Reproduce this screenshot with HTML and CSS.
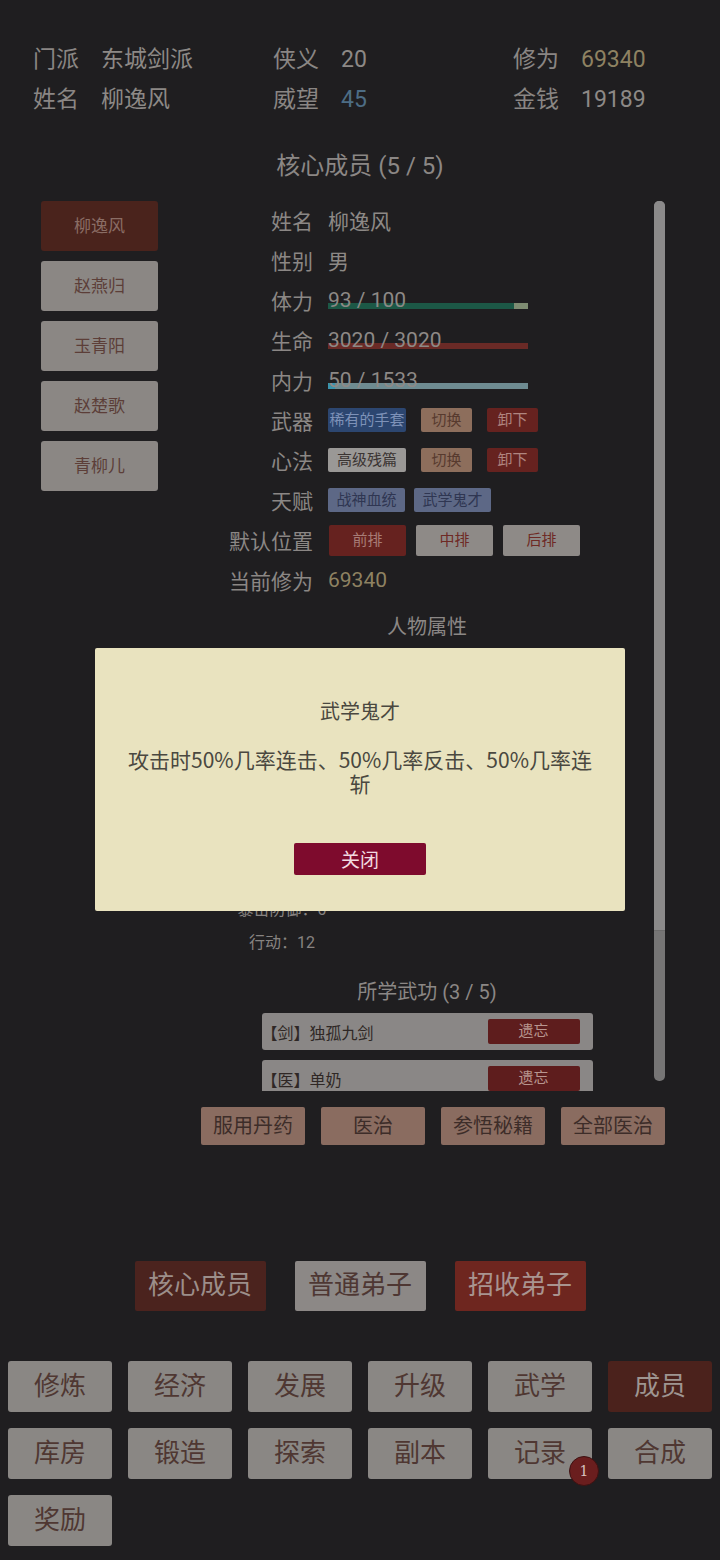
FILE: index.html
```html
<!DOCTYPE html>
<html lang="zh-CN">
<head>
    <meta charset="UTF-8">
    <meta name="viewport" content="width=device-width, initial-scale=1.0">
    <title>成员</title>
    <link rel="stylesheet" href="styles.css">
</head>
<body>
    <div class="page">
        <div class="header">
            <div class="stat"><span class="stat-label">门派</span><span class="stat-value">东城剑派</span></div>
            <div class="stat"><span class="stat-label">侠义</span><span class="stat-value">20</span></div>
            <div class="stat"><span class="stat-label">修为</span><span class="stat-value gold">69340</span></div>
            <div class="stat"><span class="stat-label">姓名</span><span class="stat-value">柳逸风</span></div>
            <div class="stat"><span class="stat-label">威望</span><span class="stat-value blue">45</span></div>
            <div class="stat"><span class="stat-label">金钱</span><span class="stat-value">19189</span></div>
        </div>

        <div class="section-title">核心成员 (5 / 5)</div>

        <div class="panel">
            <div class="members">
                <div class="member active">柳逸风</div>
                <div class="member">赵燕归</div>
                <div class="member">玉青阳</div>
                <div class="member">赵楚歌</div>
                <div class="member">青柳儿</div>
            </div>

            <div class="detail">
                <div class="row"><span class="label">姓名</span><span class="value">柳逸风</span></div>
                <div class="row"><span class="label">性别</span><span class="value">男</span></div>
                <div class="row">
                    <span class="label">体力</span>
                    <div class="bar-wrap">
                        <span class="value">93 / 100</span>
                        <div class="bar stamina"><div class="fill" style="width: 93%"></div></div>
                    </div>
                </div>
                <div class="row">
                    <span class="label">生命</span>
                    <div class="bar-wrap">
                        <span class="value">3020 / 3020</span>
                        <div class="bar life"><div class="fill" style="width: 100%"></div></div>
                    </div>
                </div>
                <div class="row">
                    <span class="label">内力</span>
                    <div class="bar-wrap">
                        <span class="value">50 / 1533</span>
                        <div class="bar inner"><div class="fill" style="width: 3.3%"></div></div>
                    </div>
                </div>
                <div class="row">
                    <span class="label">武器</span>
                    <div class="chips">
                        <span class="chip item rare">稀有的手套</span>
                        <span class="chip act swap">切换</span>
                        <span class="chip act drop">卸下</span>
                    </div>
                </div>
                <div class="row">
                    <span class="label">心法</span>
                    <div class="chips">
                        <span class="chip item plain">高级残篇</span>
                        <span class="chip act swap">切换</span>
                        <span class="chip act drop">卸下</span>
                    </div>
                </div>
                <div class="row">
                    <span class="label">天赋</span>
                    <div class="chips talents">
                        <span class="chip talent">战神血统</span>
                        <span class="chip talent">武学鬼才</span>
                    </div>
                </div>
                <div class="row">
                    <span class="label">默认位置</span>
                    <div class="chips places">
                        <span class="place on">前排</span>
                        <span class="place">中排</span>
                        <span class="place">后排</span>
                    </div>
                </div>
                <div class="row"><span class="label">当前修为</span><span class="value gold">69340</span></div>

                <div class="sub-title">人物属性</div>
                <div class="attrs">
                    <div class="attr">攻击：486</div>
                    <div class="attr">防御：215</div>
                    <div class="attr">命中：120</div>
                    <div class="attr">闪避：64</div>
                    <div class="attr">暴击：35</div>
                    <div class="attr">暴伤：150</div>
                    <div class="attr">连击：50</div>
                    <div class="attr">暴击防御：0</div>
                    <div class="attr">行动：12</div>
                </div>

                <div class="sub-title skills-title">所学武功 (3 / 5)</div>
                <div class="skills">
                    <div class="skill"><span>【剑】独孤九剑</span><span class="forget">遗忘</span></div>
                    <div class="skill"><span>【医】单奶</span><span class="forget">遗忘</span></div>
                </div>
            </div>

            <div class="scrollbar"><div class="thumb"></div></div>
        </div>

        <div class="actions">
            <button class="action">服用丹药</button>
            <button class="action">医治</button>
            <button class="action">参悟秘籍</button>
            <button class="action">全部医治</button>
        </div>

        <div class="tabs">
            <button class="tab core">核心成员</button>
            <button class="tab">普通弟子</button>
            <button class="tab recruit">招收弟子</button>
        </div>

        <div class="nav">
            <button class="nav-btn">修炼</button>
            <button class="nav-btn">经济</button>
            <button class="nav-btn">发展</button>
            <button class="nav-btn">升级</button>
            <button class="nav-btn">武学</button>
            <button class="nav-btn current">成员</button>
            <button class="nav-btn">库房</button>
            <button class="nav-btn">锻造</button>
            <button class="nav-btn">探索</button>
            <button class="nav-btn">副本</button>
            <button class="nav-btn">记录<span class="badge">1</span></button>
            <button class="nav-btn">合成</button>
            <button class="nav-btn">奖励</button>
        </div>
    </div>

    <div class="modal">
        <div class="modal-title">武学鬼才</div>
        <div class="modal-text">攻击时50%几率连击、50%几率反击、50%几率连斩</div>
        <button class="modal-close">关闭</button>
    </div>
</body>
</html>
```

FILE: styles.css
```css
body {
    margin: 0;
    background: #1f1e20;
    font-family: Roboto, "Noto Sans CJK SC", sans-serif;
    color: #8d8986;
}

.page {
    width: 720px;
    height: 1560px;
    padding-top: 40px;
    box-sizing: border-box;
}

button {
    font-family: inherit;
    border: none;
    padding: 0;
    line-height: 1.2;
}

.header {
    display: grid;
    grid-template-columns: repeat(3, 240px);
    padding-left: 33px;
    font-size: 23px;
    line-height: 40px;
}

.stat-label {
    color: #8a8684;
    display: inline-block;
    width: 68px;
}

.gold {
    color: #8e8262;
}

.blue {
    color: #4d6d85;
}

.section-title {
    margin-top: 26px;
    text-align: center;
    font-size: 24px;
    line-height: 40px;
    color: #8b8785;
}

/* member panel */
.panel {
    margin-top: 14px;
    height: 891px;
    overflow: hidden;
    display: flex;
}

.members {
    margin-left: 41px;
    width: 117px;
    padding-top: 1px;
    display: flex;
    flex-direction: column;
    gap: 10px;
}

.member {
    height: 50px;
    line-height: 50px;
    text-align: center;
    font-size: 17px;
    background: #8b8784;
    color: #5c3e38;
    border-radius: 3px;
}

.member.active {
    background: #4a231c;
    color: #8a6d65;
}

.detail {
    margin-left: 42px;
    width: 454px;
    flex-shrink: 0;
}

.row {
    display: flex;
    align-items: center;
    height: 40px;
    font-size: 21px;
}

.label {
    width: 113px;
    text-align: right;
    margin-right: 15px;
    color: #8b8785;
    flex-shrink: 0;
}

.bar-wrap {
    position: relative;
    width: 200px;
    height: 40px;
    line-height: 40px;
}

.bar-wrap .value {
    position: relative;
    z-index: 1;
}

.bar {
    position: absolute;
    left: 0;
    right: 0;
    top: 23px;
    height: 6px;
}

.bar .fill {
    height: 100%;
}

.bar.stamina {
    background: #7e8c72;
}

.bar.stamina .fill {
    background: #1c5846;
}

.bar.life {
    background: #6a2a26;
}

.bar.life .fill {
    background: #6a2a26;
}

.bar.inner {
    background: #6e8b91;
}

.bar.inner .fill {
    background: #3b93ad;
}

.chips {
    display: flex;
    gap: 15px;
    font-size: 15px;
}

.chip {
    height: 24px;
    line-height: 24px;
    text-align: center;
    border-radius: 2px;
}

.chip.item {
    width: 78px;
}

.chip.act {
    width: 51px;
}

.chip.rare {
    background: #2c4670;
    color: #7e92b8;
}

.chip.plain {
    background: #9a9896;
    color: #3a3432;
}

.chip.swap {
    background: #8d6e5c;
    color: #573a2e;
}

.chip.drop {
    background: #66221f;
    color: #b08580;
}

.chips.talents {
    gap: 9px;
}

.chip.talent {
    width: 77px;
    background: #5d6886;
    color: #2f3652;
}

.chips.places {
    gap: 10px;
    margin-left: 1px;
}

.place {
    width: 77px;
    height: 31px;
    line-height: 31px;
    text-align: center;
    border-radius: 2px;
    background: #8e8a87;
    color: #6e2a25;
}

.place.on {
    background: #66221f;
    color: #a87c76;
}

.sub-title {
    margin-top: 12px;
    text-align: center;
    font-size: 20px;
    line-height: 30px;
    color: #8b8785;
}

.attrs {
    margin-top: 20px;
    width: 164px;
}

.attr {
    height: 33px;
    line-height: 33px;
    text-align: center;
    font-size: 16px;
    color: #878381;
}

.skills-title {
    margin-top: 18px;
}

.skills {
    margin-top: 6px;
    display: flex;
    flex-direction: column;
    align-items: center;
    gap: 10px;
}

.skill {
    width: 331px;
    height: 37px;
    box-sizing: border-box;
    padding-right: 13px;
    display: flex;
    align-items: center;
    justify-content: space-between;
    background: #8a8786;
    border-radius: 3px;
    font-size: 16px;
    color: #2f2725;
}

.forget {
    width: 92px;
    height: 25px;
    line-height: 25px;
    text-align: center;
    font-size: 15px;
    background: #5e1d1d;
    color: #b8958f;
    border-radius: 2px;
}

.scrollbar {
    margin-top: 1px;
    width: 11px;
    height: 880px;
    background: #767575;
    border-radius: 5px;
    overflow: hidden;
}

.thumb {
    height: 729px;
    background: #8b8a8a;
    border-bottom: 1px solid #6c6b6b;
}

/* actions */
.actions {
    margin-top: 16px;
    display: flex;
    justify-content: flex-end;
    gap: 16px;
    padding-right: 55px;
}

.action {
    width: 104px;
    height: 38px;
    font-size: 20px;
    background: #8a6c60;
    color: #3d2d29;
    border-radius: 2px;
}

.tabs {
    margin-top: 116px;
    display: flex;
    justify-content: center;
    gap: 29px;
}

.tab {
    width: 131px;
    height: 50px;
    font-size: 26px;
    background: #8c8886;
    color: #4e3733;
    border-radius: 2px;
}

.tab.core {
    background: #4b231e;
    color: #9c8e8a;
}

.tab.recruit {
    background: #6e261f;
    color: #a99490;
}

.nav {
    margin-top: 50px;
    display: grid;
    grid-template-columns: repeat(6, 104px);
    gap: 16px;
    padding-left: 8px;
}

.nav-btn {
    position: relative;
    height: 51px;
    font-size: 26px;
    background: #8a8784;
    color: #4f3732;
    border-radius: 3px;
}

.nav-btn.current {
    background: #4b221c;
    color: #9e9591;
}

.badge {
    position: absolute;
    right: -7px;
    bottom: -7px;
    width: 28px;
    height: 28px;
    line-height: 28px;
    border-radius: 50%;
    background: #6a1e1e;
    border: 1px solid #3e1212;
    color: #d8c2c0;
    font-family: "DejaVu Serif", serif;
    font-size: 14px;
    text-align: center;
}

/* talent popup */
.modal {
    position: absolute;
    left: 95px;
    top: 648px;
    width: 530px;
    height: 263px;
    box-sizing: border-box;
    padding: 48px 32px 0;
    background: #e9e3bf;
    border-radius: 2px;
    text-align: center;
    font-family: "Noto Sans CJK SC", sans-serif;
    color: #4a4840;
}

.modal-title {
    font-size: 20px;
    line-height: 30px;
}

.modal-text {
    margin-top: 21px;
    font-size: 21px;
    line-height: 24px;
}

.modal-close {
    margin-top: 48px;
    width: 132px;
    height: 32px;
    font-family: "Noto Sans CJK SC", sans-serif;
    font-size: 19px;
    background: #7e0b2d;
    color: #f2dbe1;
    border-radius: 2px;
}
```
